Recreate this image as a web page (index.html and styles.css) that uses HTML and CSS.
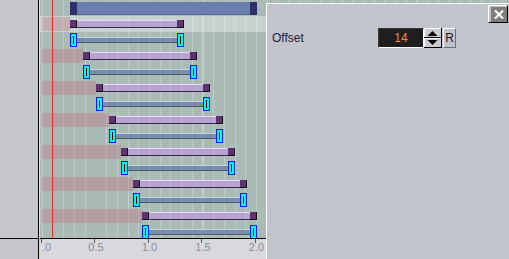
FILE: index.html
```html
<!DOCTYPE html>
<html>
<head>
<meta charset="utf-8">
<link rel="stylesheet" href="styles.css">
</head>
<body>
<div class="app">
  <div class="side">
    <div class="side-top"></div>
    <div class="side-bottom"></div>
  </div>
  <div class="main">
    <div class="tracks">
      <div class="row"><div class="tbar" style="margin-left:30px;width:187px"><i class="tcap"></i><i class="tbody"></i><i class="tcap"></i></div></div>

      <div class="row sel"><div class="shade" style="width:28px"></div><div class="pbar" style="width:114px"><i class="pcap"></i><i class="pbody"></i><i class="pcap"></i></div></div>
      <div class="row"><div class="cbar" style="margin-left:30px;width:114px"><i class="handle"></i><i class="conn"></i><i class="handle"></i></div></div>

      <div class="row"><div class="shade" style="width:41px"></div><div class="pbar" style="width:114px"><i class="pcap"></i><i class="pbody"></i><i class="pcap"></i></div></div>
      <div class="row"><div class="cbar" style="margin-left:43px;width:114px"><i class="handle"></i><i class="conn"></i><i class="handle"></i></div></div>

      <div class="row"><div class="shade" style="width:54px"></div><div class="pbar" style="width:114px"><i class="pcap"></i><i class="pbody"></i><i class="pcap"></i></div></div>
      <div class="row"><div class="cbar" style="margin-left:56px;width:114px"><i class="handle"></i><i class="conn"></i><i class="handle"></i></div></div>

      <div class="row"><div class="shade" style="width:67px"></div><div class="pbar" style="width:114px"><i class="pcap"></i><i class="pbody"></i><i class="pcap"></i></div></div>
      <div class="row"><div class="cbar" style="margin-left:69px;width:114px"><i class="handle"></i><i class="conn"></i><i class="handle"></i></div></div>

      <div class="row"><div class="shade" style="width:79px"></div><div class="pbar" style="width:114px"><i class="pcap"></i><i class="pbody"></i><i class="pcap"></i></div></div>
      <div class="row"><div class="cbar" style="margin-left:81px;width:114px"><i class="handle"></i><i class="conn"></i><i class="handle"></i></div></div>

      <div class="row"><div class="shade" style="width:91px"></div><div class="pbar" style="width:114px"><i class="pcap"></i><i class="pbody"></i><i class="pcap"></i></div></div>
      <div class="row"><div class="cbar" style="margin-left:93px;width:114px"><i class="handle"></i><i class="conn"></i><i class="handle"></i></div></div>

      <div class="row"><div class="shade" style="width:100px"></div><div class="pbar" style="width:115px"><i class="pcap"></i><i class="pbody"></i><i class="pcap"></i></div></div>
      <div class="row"><div class="cbar" style="margin-left:102px;width:115px"><i class="handle"></i><i class="conn"></i><i class="handle"></i></div></div>

      <div class="playhead"></div>
    </div>
    <div class="ruler">
      <div class="cell first"><span class="tick"></span><span class="lbl lbl-first">.0</span></div>
      <div class="cell"><span class="tick"></span><span class="lbl">0.5</span></div>
      <div class="cell"><span class="tick"></span><span class="lbl">1.0</span></div>
      <div class="cell"><span class="tick"></span><span class="lbl">1.5</span></div>
      <div class="cell"><span class="tick"></span><span class="lbl">2.0</span></div>
    </div>
  </div>

  <div class="panel">
    <div class="panel-head">
      <div class="close">
        <div class="close-in">
          <svg width="16" height="15" viewBox="0 0 16 15"><path d="M4 3.5 L12 11.5 M12 3.5 L4 11.5" stroke="#fff" stroke-width="2" fill="none"/></svg>
        </div>
      </div>
    </div>
    <div class="field">
      <span class="label">Offset</span>
      <span class="num">14</span>
      <svg class="spin" width="18" height="20" viewBox="0 0 18 20">
        <rect x="0" y="0" width="18" height="20" fill="#c9cbd1"/>
        <rect x="0" y="0" width="17" height="1" fill="#fff"/>
        <rect x="0" y="0" width="1" height="19" fill="#fff"/>
        <rect x="0" y="9" width="18" height="1" fill="#000"/>
        <rect x="0" y="10" width="17" height="1" fill="#fff"/>
        <rect x="0" y="19" width="18" height="1" fill="#000"/>
        <rect x="17" y="0" width="1" height="20" fill="#000"/>
        <polygon points="3.5,8 13.5,8 8.5,3" fill="#000"/>
        <polygon points="3.5,12 13.5,12 8.5,17" fill="#000"/>
      </svg>
      <span class="rbtn">R</span>
    </div>
  </div>
</div>
</body>
</html>
```
FILE: styles.css
```css
* { box-sizing: border-box; margin: 0; padding: 0; }
html, body { width: 509px; height: 259px; overflow: hidden; }
body {
  font-family: "Liberation Sans", Arial, sans-serif;
  font-size: 12px;
  background: #c5c7cd;
}
.app {
  position: relative;
  display: flex;
  width: 509px;
  height: 259px;
}
.side {
  width: 39px;
  flex: none;
  display: flex;
  flex-direction: column;
  border-right: 1px solid #000;
  background: #c5c7cd;
}
.side-top { height: 239px; border-bottom: 1px solid #000; }
.side-bottom { flex: 1; }
.main {
  flex: 1;
  min-width: 0;
  display: flex;
  flex-direction: column;
}
.tracks {
  position: relative;
  height: 239px;
  flex: none;
  overflow: hidden;
  border-left: 1px solid #dde3e1;
  border-bottom: 1px solid #000;
  background-color: #aabab5;
  background-image: repeating-linear-gradient(to right, transparent 0 2px, #bfccc8 2px 3px, transparent 3px 10.7px);
}
.row {
  height: 16px;
  display: flex;
  align-items: flex-start;
}
.row.sel { background: rgba(255, 255, 255, 0.35); }
.row i { display: block; }

.tbar { display: flex; height: 13px; margin-top: 2px; }
.tcap { width: 7px; height: 13px; background: #2e3069; flex: none; }
.tbody { flex: 1; height: 13px; background: #6a7fae; border-bottom: 1px solid #5a6d9a; }

.shade {
  margin-left: 2px;
  margin-top: 1px;
  height: 14px;
  background: rgba(190, 120, 135, 0.4);
  flex: none;
}
.pbar { display: flex; height: 8px; margin-top: 4px; flex: none; }
.pcap {
  width: 7px;
  height: 8px;
  flex: none;
  background: #5f3272;
  border-right: 1px solid #1a0e1e;
  border-bottom: 1px solid #1a0e1e;
}
.pbody {
  flex: 1;
  height: 8px;
  background: #b7a3d2;
  border-top: 1px solid #e4dbef;
  border-bottom: 1px solid #3b2d46;
}

.cbar { display: flex; align-items: flex-start; height: 14px; margin-top: 1px; flex: none; }
.handle {
  width: 7px;
  height: 14px;
  flex: none;
  border: 1px solid #0a1cf0;
  background: linear-gradient(#000, #000) center / 1px 8px no-repeat, #00f6f6;
}
.conn {
  flex: 1;
  height: 6px;
  margin-top: 4px;
  background: #7a8eaa;
  border-top: 1px solid #c6d4e2;
  border-bottom: 1px solid #4e5a70;
}

.playhead {
  position: absolute;
  left: 12px;
  top: 0;
  bottom: 0;
  width: 1px;
  background: #ff2020;
}

.ruler {
  flex: 1;
  display: flex;
  overflow: hidden;
  background: #d8d9de;
}
.cell {
  width: 53.5px;
  flex: none;
  display: flex;
  flex-direction: column;
  align-items: center;
}
.cell.first { margin-left: -24.75px; }
.tick { display: block; width: 1px; height: 4px; background: #56575d; }
.lbl {
  display: block;
  margin-left: 3px;
  margin-top: -2px;
  font-size: 11px;
  line-height: 13px;
  color: #8a8b91;
}
.lbl.lbl-first { margin-left: 11px; }

.panel {
  position: absolute;
  left: 266px;
  top: 3px;
  width: 243px;
  height: 256px;
  display: flex;
  flex-direction: column;
  background: #c2c4cb;
  border-left: 1px solid #fff;
  border-top: 1px solid #fff;
}
.panel-head {
  display: flex;
  justify-content: flex-end;
  padding: 1px 1px 0 0;
}
.close {
  width: 20px;
  height: 18px;
  border: 1px solid;
  border-color: #fff #000 #000 #fff;
  padding: 1px 0 0 2px;
}
.close-in {
  width: 16px;
  height: 15px;
  background: #7f7e7a;
}
.close-in svg { display: block; }
.field {
  display: flex;
  align-items: center;
  margin-top: 5px;
  padding-left: 5px;
}
.label {
  width: 106px;
  flex: none;
  line-height: 20px;
  color: #1d1f3d;
}
.num {
  width: 46px;
  height: 20px;
  flex: none;
  border: 1px solid;
  border-color: #3a3a3a #fff #fff #3a3a3a;
  background: #1e1e1e;
  color: #f0902c;
  text-align: center;
  line-height: 18px;
}
.spin { display: block; flex: none; }
.rbtn {
  width: 13px;
  height: 20px;
  margin-left: 1px;
  flex: none;
  border: 1px solid;
  border-color: #fff #6e7076 #6e7076 #fff;
  color: #15151f;
  text-align: center;
  line-height: 18px;
}
```
